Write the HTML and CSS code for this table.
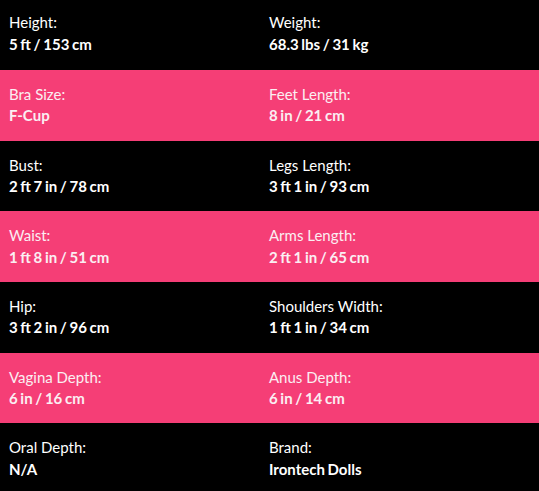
FILE: index.html
```html
<!DOCTYPE html>
<html>
<head>
<meta charset="utf-8">
<link rel="stylesheet" href="styles.css">
</head>
<body>
<div class="specs">
  <div class="row dark">
    <div class="cell"><div class="label">Height:</div><div class="value">5 ft / 153 cm</div></div>
    <div class="cell"><div class="label">Weight:</div><div class="value">68.3 lbs / 31 kg</div></div>
  </div>
  <div class="row pink">
    <div class="cell"><div class="label">Bra Size:</div><div class="value">F-Cup</div></div>
    <div class="cell"><div class="label">Feet Length:</div><div class="value">8 in / 21 cm</div></div>
  </div>
  <div class="row dark">
    <div class="cell"><div class="label">Bust:</div><div class="value">2 ft 7 in / 78 cm</div></div>
    <div class="cell"><div class="label">Legs Length:</div><div class="value">3 ft 1 in / 93 cm</div></div>
  </div>
  <div class="row pink">
    <div class="cell"><div class="label">Waist:</div><div class="value">1 ft 8 in / 51 cm</div></div>
    <div class="cell"><div class="label">Arms Length:</div><div class="value">2 ft 1 in / 65 cm</div></div>
  </div>
  <div class="row dark">
    <div class="cell"><div class="label">Hip:</div><div class="value">3 ft 2 in / 96 cm</div></div>
    <div class="cell"><div class="label">Shoulders Width:</div><div class="value">1 ft 1 in / 34 cm</div></div>
  </div>
  <div class="row pink">
    <div class="cell"><div class="label">Vagina Depth:</div><div class="value">6 in / 16 cm</div></div>
    <div class="cell"><div class="label">Anus Depth:</div><div class="value">6 in / 14 cm</div></div>
  </div>
  <div class="row dark">
    <div class="cell"><div class="label">Oral Depth:</div><div class="value">N/A</div></div>
    <div class="cell"><div class="label">Brand:</div><div class="value">Irontech Dolls</div></div>
  </div>
</div>
</body>
</html>
```

FILE: styles.css
```css
html, body {
  margin: 0;
  padding: 0;
  background: #000;
}
body {
  height: 491px;
  overflow: hidden;
}
.specs {
  display: flex;
  flex-direction: column;
  font-family: Lato, "Open Sans", sans-serif;
  font-size: 15px;
  line-height: 21.5px;
  color: #fff;
}
.row {
  display: grid;
  grid-template-columns: 1fr 1fr;
  padding: 13.85px 10px 13.85px 9px;
  flex-shrink: 0;
}
.row:first-child {
  padding-top: 12.2px;
  padding-bottom: 14.8px;
}
.dark { background: #000; }
.pink { background: #f53e76; }
.label { font-weight: 400; }
.value { font-weight: 700; word-spacing: -1px; }
.pink .label, .pink .value { color: #fbeef2; }
```
